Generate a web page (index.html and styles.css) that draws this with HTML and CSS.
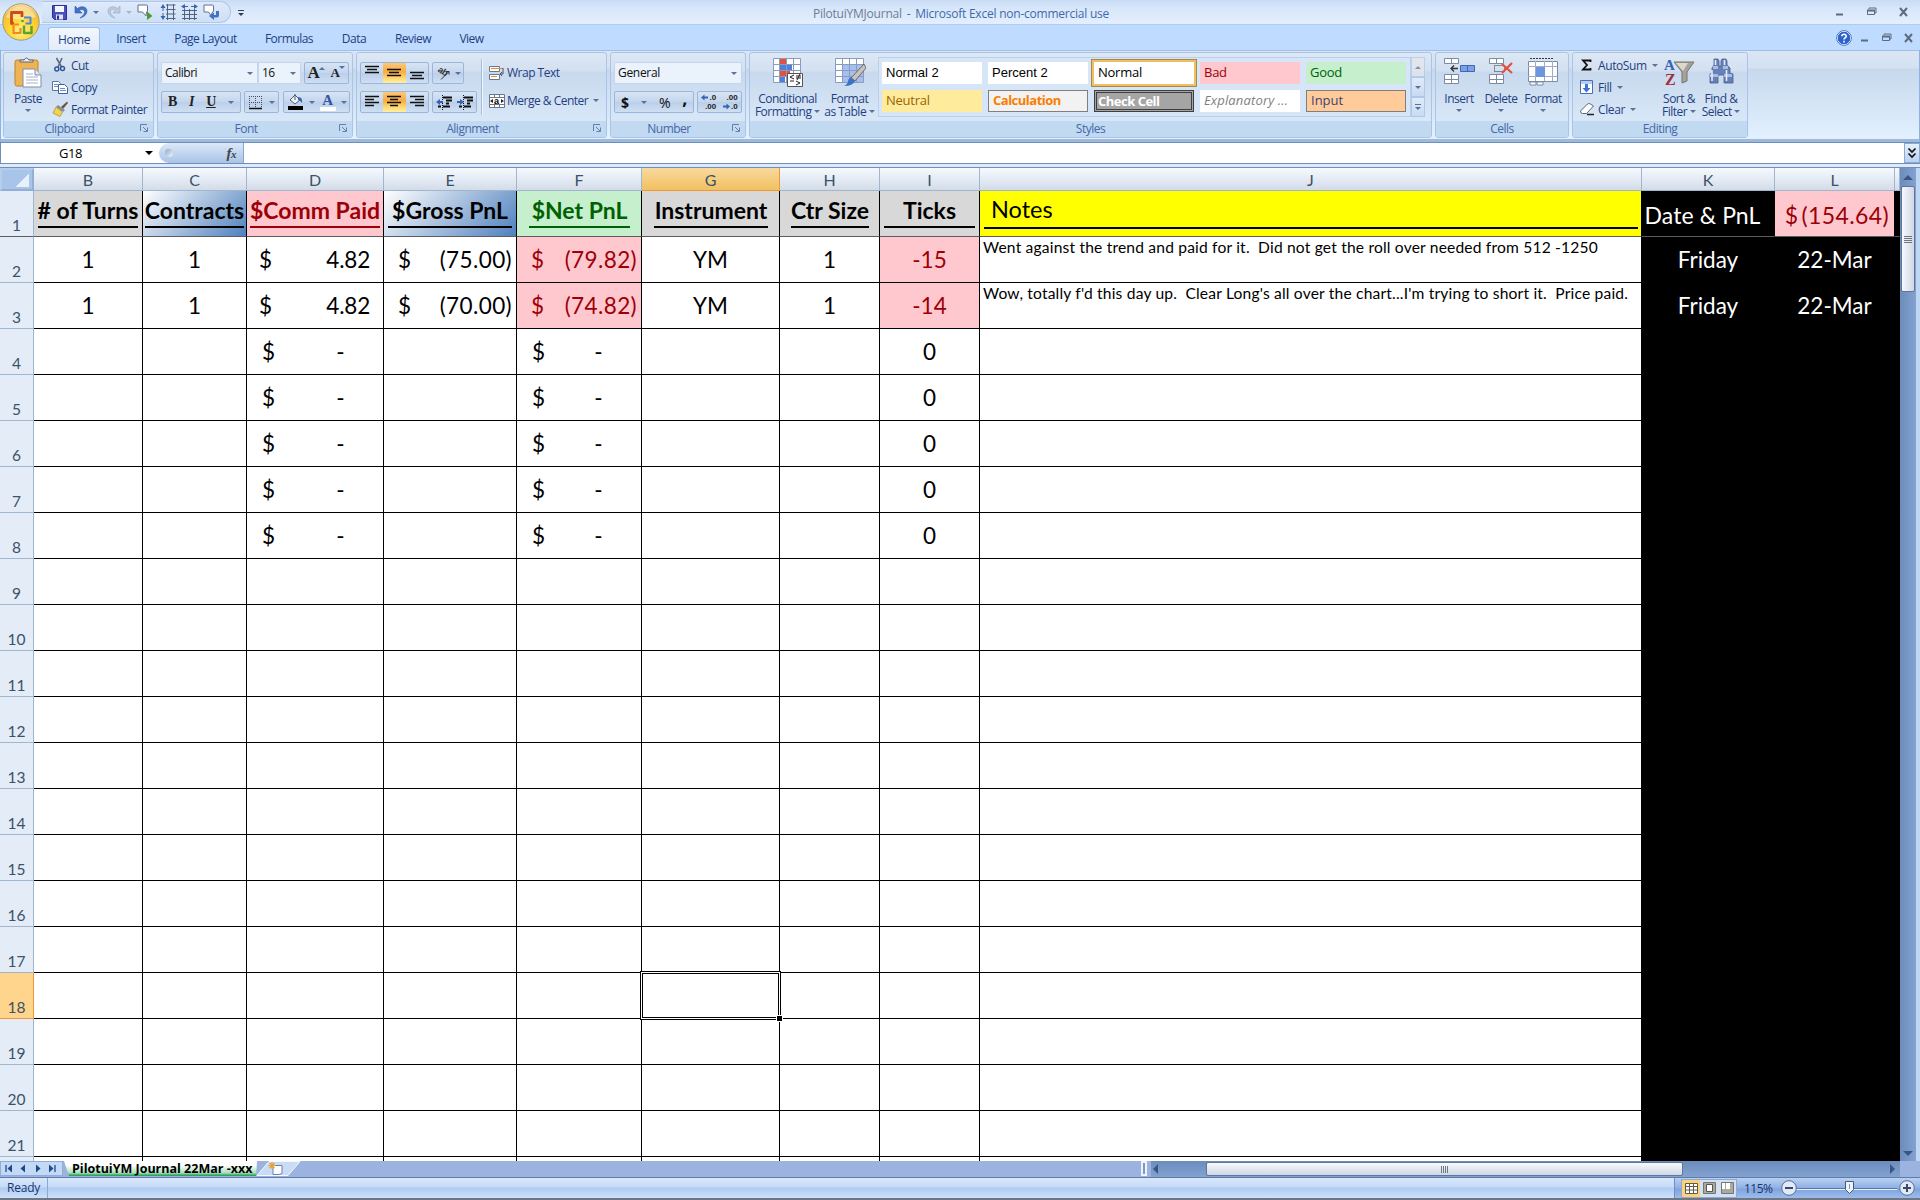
FILE: index.html
```html
<!DOCTYPE html>
<html lang="en">
<head>
    <meta charset="UTF-8">
    <title>PilotuiYMJournal - Microsoft Excel non-commercial use</title>
    <link rel="stylesheet" href="styles.css">
</head>
<body>
    <!-- Title bar -->
    <div class="titlebar">
        <div class="quick-access">
            <svg class="qa-save" width="15" height="15" viewBox="0 0 15 15"><path d="M0.5 0.5h14v14h-12l-2-2z" fill="#4a50b8" stroke="#2c3190"/><path d="M3 1h9v6H3z" fill="#f4f6ff"/><path d="M4 9.500h7v5H4z" fill="#dfe3f6"/><path d="M5 10.500h2v4H5z" fill="#2c3190"/></svg>
            <svg class="qa-undo" width="14" height="14" viewBox="0 0 14 14"><path d="M1 1v7h7L5.500 5.500C8 3.500 11 5 10.500 7.500 10 10 8 11.500 6 13c4-1 7-3.500 7-7C13 1.500 7 .5 3.500 3.500z" fill="#4472c8" stroke="#2f5aa8" stroke-width=".6"/></svg>
            <i class="arrow"></i>
            <svg class="qa-redo" width="14" height="14" viewBox="0 0 14 14"><path d="M13 1v7H6l2.500-2.500C6 3.500 3 5 3.500 7.500 4 10 6 11.500 8 13 4 12 1 9.500 1 6 1 1.500 7 .5 10.500 3.500z" fill="#bccbe2" stroke="#94a7c4" stroke-width=".6"/></svg>
            <i class="arrow faded"></i>
            <svg class="qa-note" width="16" height="16" viewBox="0 0 16 16"><path d="M1 1h8.500q1 0 1 1v5q0 1-1 1L9 12 5.500 8H1z" fill="#fff" stroke="#63718c"/><path d="M10 7.500l5.500 4.500-5.500 4z" fill="#4f9a35"/></svg>
            <svg class="qa-rows" width="16" height="16" viewBox="0 0 16 16"><path d="M6 1h9.500M6 5.500h9.500M6 10h9.500M6 14.500h9.500M7.500 0v16M13.500 0v16" stroke="#51627f" fill="none"/><path d="M3 0l2.500 4h-5zM3 16l2.500-4h-5z" fill="#3563b5"/><path d="M3 4v3M3 9v4" stroke="#3563b5"/></svg>
            <svg class="qa-cols" width="17" height="16" viewBox="0 0 17 16"><path d="M1 6.500h15M1 10.500h15M1 14.500h15M3.500 5v11M8.500 5v11M13.500 5v11" stroke="#51627f" fill="none"/><path d="M0 2.500l4-2.500v5zM17 2.500l-4-2.500v5z" fill="#3563b5"/><path d="M4 2.500h3M10 2.500h3" stroke="#3563b5"/></svg>
            <svg class="qa-back" width="17" height="16" viewBox="0 0 17 16"><path d="M1 1h8.500q1 0 1 1v5q0 1-1 1L8 11.500 5.500 8H1z" fill="#fff" stroke="#63718c"/><path d="M16 7v4.500q0 2-2 2h-3V16l-5-4 5-3.500V11h2V7z" fill="#4472c8"/></svg>
        </div>
        <div class="qa-more"></div>
        <div class="title"><span class="doc-name">PilotuiYMJournal</span> <span class="dash">-</span> <span class="app-name">Microsoft Excel non-commercial use</span></div>
        <div class="window-buttons">
            <svg width="12" height="12" viewBox="0 0 12 12"><path d="M2 8.500h7" stroke="#5d6b80" stroke-width="2"/></svg>
            <svg width="12" height="12" viewBox="0 0 12 12"><path d="M3 3V2h7v5H9M1.500 4.500h7v4h-7z" fill="none" stroke="#5d6b80"/><path d="M1 4.500h8" stroke="#5d6b80" stroke-width="2"/></svg>
            <svg width="12" height="12" viewBox="0 0 12 12"><path d="M2 2l7 8M9 2l-7 8" stroke="#5d6b80" stroke-width="2"/></svg>
        </div>
        <div class="office-button">
            <svg width="38" height="38" viewBox="0 0 38 38">
                <defs>
                    <radialGradient id="orb" cx=".5" cy=".75" r=".75"><stop offset="0" stop-color="#fff29a"/><stop offset=".45" stop-color="#ffd62e"/><stop offset=".8" stop-color="#f0bd3c"/><stop offset="1" stop-color="#fbe7b0"/></radialGradient>
                </defs>
                <circle cx="19" cy="19" r="18.200" fill="url(#orb)" stroke="#a5997a"/>
                <path d="M4 14a16 16 0 0 1 30 0q-15 5-30 0z" fill="#fff" opacity=".45"/>
                <path d="M12 20.500H9.500v-11H20V14" fill="none" stroke="#cf4a1a" stroke-width="2.800" stroke-linejoin="round"/>
                <path d="M22 14.500h6.500v6h-5" fill="none" stroke="#4a86d8" stroke-width="2" stroke-linejoin="round"/>
                <path d="M20.500 19v-2M22 22.500v7.500h7.500v-7" fill="none" stroke="#5ca52c" stroke-width="2.500" stroke-linejoin="round"/>
                <path d="M17 21.500h-5.500v8.500h7v-5" fill="none" stroke="#f08a1c" stroke-width="2.200" stroke-linejoin="round"/>
            </svg>
        </div>
    </div>

    <!-- Ribbon tabs -->
    <div class="tabs">
        <div class="tab active">Home</div>
        <div class="tab tab-insert">Insert</div>
        <div class="tab tab-layout">Page Layout</div>
        <div class="tab tab-formulas">Formulas</div>
        <div class="tab tab-data">Data</div>
        <div class="tab tab-review">Review</div>
        <div class="tab tab-view">View</div>
        <div class="tabs-right">
            <svg width="16" height="16" viewBox="0 0 16 16"><circle cx="8" cy="8" r="6.800" fill="#2e62cc" stroke="#fff" stroke-width="1"/><circle cx="8" cy="8" r="7.400" fill="none" stroke="#2f5fb5" stroke-width=".8"/><path d="M5.800 6.200C6 3.500 10.400 3.700 10.200 6.300 10 7.800 8 7.800 8 9.500M8 10.800v1.700" fill="none" stroke="#fff" stroke-width="1.600"/></svg>
            <svg width="12" height="12" viewBox="0 0 12 12"><path d="M2 8.500h7" stroke="#5d6b80" stroke-width="2"/></svg>
            <svg width="12" height="12" viewBox="0 0 12 12"><path d="M3 3V2h7v5H9M1.500 4.500h7v4h-7z" fill="none" stroke="#5d6b80"/><path d="M1 4.500h8" stroke="#5d6b80" stroke-width="2"/></svg>
            <svg width="12" height="12" viewBox="0 0 12 12"><path d="M2 2l7 8M9 2l-7 8" stroke="#5d6b80" stroke-width="2"/></svg>
        </div>
    </div>

    <!-- Ribbon -->
    <div class="ribbon">
        <div class="group clipboard">
            <div class="group-body">
                <div class="big-button">
                    <svg width="28" height="31" viewBox="0 0 28 31"><rect x="1" y="3" width="23" height="26" rx="2" fill="#eeb354" stroke="#c08428"/><path d="M6 5h13V3h-4q-2.500-4-5 0H6z" fill="#e8ebf0" stroke="#62656c"/><path d="M9 12h12l6 6v12H9z" fill="#fff" stroke="#7c8dae"/><path d="M21 12v6h6" fill="#dfe7f5" stroke="#7c8dae"/><path d="M12 17h7M12 20h12M12 23h12M12 26h12" stroke="#a5b3ca"/></svg>
                    <span>Paste</span>
                    <i class="arrow"></i>
                </div>
                <div class="small-buttons">
                    <div><svg width="16" height="16" viewBox="0 0 16 16"><path d="M4.500 1l5 9M10 1L6 10" stroke="#5d6c86" stroke-width="1.600"/><circle cx="4.800" cy="12" r="2" fill="none" stroke="#33559c" stroke-width="1.500"/><circle cx="10.500" cy="11.500" r="2" fill="none" stroke="#33559c" stroke-width="1.500"/></svg>Cut</div>
                    <div><svg width="16" height="16" viewBox="0 0 16 16"><path d="M.5 2.500h6l2 2v7h-8z" fill="#fff" stroke="#5673aa"/><path d="M2 5.500h4M2 7.500h5" stroke="#6b8bc4"/><path d="M6.500 5.500h6l3 3v6h-9z" fill="#fff" stroke="#40609e"/><path d="M8 9.500h5M8 11.500h6" stroke="#6b8bc4"/></svg>Copy</div>
                    <div><svg width="16" height="16" viewBox="0 0 16 16"><path d="M15 .5L9 6l2 2 5-6z" fill="#6e5540"/><path d="M6 4l7 5-2 2-7-5z" fill="#8490a4"/><path d="M4 6l6.500 5L8 15.500 1 12z" fill="#f1d251" stroke="#b08d24" stroke-width=".7"/></svg>Format Painter</div>
                </div>
            </div>
            <div class="group-label">Clipboard<svg class="launcher" width="9" height="9" viewBox="0 0 9 9"><path d="M.5 7V.5H7M3 3l4 4M7.500 3.500v4h-4" fill="none" stroke="#6380ae"/></svg></div>
        </div>

        <div class="group font">
            <div class="group-body stack">
                <div class="control-row">
                    <div class="combo font-name">Calibri<i class="arrow"></i></div>
                    <div class="combo font-size">16<i class="arrow"></i></div>
                    <div class="button-set grow-shrink">
                        <span class="serif">A<i class="arrow up"></i></span>
                        <span class="serif small">A<i class="arrow"></i></span>
                    </div>
                </div>
                <div class="control-row">
                    <div class="button-set biu">
                        <b class="serif">B</b>
                        <em class="serif">I</em>
                        <u class="serif">U</u>
                        <i class="arrow"></i>
                    </div>
                    <div class="button-set borders">
                        <svg width="15" height="15" viewBox="0 0 15 15"><path d="M1 1.500h13M1 7.500h13M1.500 1v12M7.500 1v12M13.500 1v12" stroke="#44506a" stroke-dasharray="1 1"/><path d="M1 13.500h13" stroke="#111" stroke-width="1.500"/></svg>
                        <i class="arrow"></i>
                    </div>
                    <div class="button-set colors">
                        <svg width="17" height="18" viewBox="0 0 17 18"><path d="M3 7l5-5 5 5-5 4z" fill="#eef2f8" stroke="#4d5c78"/><path d="M8 1v6" stroke="#4d5c78"/><path d="M11 4q5 0 4 6-2-3-4-3z" fill="#3563b5"/><path d="M1 13h15v4H1z" fill="#000"/></svg>
                        <i class="arrow"></i>
                        <span class="font-color serif">A</span>
                        <i class="arrow"></i>
                    </div>
                </div>
            </div>
            <div class="group-label">Font<svg class="launcher" width="9" height="9" viewBox="0 0 9 9"><path d="M.5 7V.5H7M3 3l4 4M7.500 3.500v4h-4" fill="none" stroke="#6380ae"/></svg></div>
        </div>

        <div class="group alignment">
            <div class="group-body">
                <div class="stack align-left">
                    <div class="control-row">
                        <div class="button-set trio">
                            <span><svg width="15" height="15" viewBox="0 0 15 15"><path d="M0 1.500h14M2 4.500h10M0 7.500h14" stroke="#111" stroke-width="1.500"/></svg></span>
                            <span class="on"><svg width="15" height="15" viewBox="0 0 15 15"><path d="M0 4.500h14M2 7.500h10M0 10.500h14" stroke="#111" stroke-width="1.500"/></svg></span>
                            <span><svg width="15" height="15" viewBox="0 0 15 15"><path d="M0 7.500h14M2 10.500h10M0 13.500h14" stroke="#111" stroke-width="1.500"/></svg></span>
                        </div>
                        <div class="button-set orient">
                            <svg width="16" height="16" viewBox="0 0 16 16"><text x="2" y="9" font-size="9" font-weight="bold" font-family="Liberation Sans, sans-serif" fill="#333" transform="rotate(35 7 8)">ab</text><path d="M6 14.500l8-8M11 6.500h3v3" fill="none" stroke="#333"/></svg>
                            <i class="arrow"></i>
                        </div>
                    </div>
                    <div class="control-row">
                        <div class="button-set trio">
                            <span><svg width="15" height="15" viewBox="0 0 15 15"><path d="M0 2.500h14M0 5.500h9M0 8.500h14M0 11.500h9" stroke="#111" stroke-width="1.500"/></svg></span>
                            <span class="on"><svg width="15" height="15" viewBox="0 0 15 15"><path d="M0 2.500h14M3 5.500h8M0 8.500h14M3 11.500h8" stroke="#111" stroke-width="1.500"/></svg></span>
                            <span><svg width="15" height="15" viewBox="0 0 15 15"><path d="M0 2.500h14M5 5.500h9M0 8.500h14M5 11.500h9" stroke="#111" stroke-width="1.500"/></svg></span>
                        </div>
                        <div class="button-set indent">
                            <svg width="16" height="15" viewBox="0 0 16 15"><path d="M7 2.500h9M10 5.500h6M10 8.500h3M2 11.500h3M7 11.500h7" stroke="#111" stroke-width="2"/><path d="M6.500 0v15" stroke="#111" stroke-dasharray="1 1"/><path d="M0 7l4-3v2h3v2H4v2z" fill="#3563b5"/></svg>
                            <svg width="16" height="15" viewBox="0 0 16 15"><path d="M7 2.500h9M10 5.500h6M10 8.500h3M2 11.500h3M7 11.500h7" stroke="#111" stroke-width="2"/><path d="M6.500 0v15" stroke="#111" stroke-dasharray="1 1"/><path d="M7 7L3 4v2H0v2h3v2z" fill="#3563b5"/></svg>
                        </div>
                    </div>
                </div>
                <div class="align-right">
                    <div><svg width="16" height="16" viewBox="0 0 16 16"><path d="M.5 1.500h10v5H.5zM.5 9.500h10v5H.5z" fill="#fff" stroke="#6c7688"/><path d="M2 3.500h12M2 11.500h6" stroke="#e08a3c"/><path d="M14 3v6h-2M13 7l-2 2 2 2" fill="none" stroke="#44506a"/></svg>Wrap Text</div>
                    <div><svg width="16" height="16" viewBox="0 0 16 16"><path d="M.5 1.500h15v13H.5zM.5 4.500h15M.5 11.500h15M5.500 1v3M10.500 1v3M5.500 12v3M10.500 12v3" fill="#fff" stroke="#6c7688"/><text x="5" y="11" font-size="9" font-weight="bold" font-family="Liberation Sans, sans-serif">a</text><path d="M1 8l3-2v4zM15 8l-3-2v4z" fill="#222"/></svg>Merge &amp; Center<i class="arrow"></i></div>
                </div>
            </div>
            <div class="group-label">Alignment<svg class="launcher" width="9" height="9" viewBox="0 0 9 9"><path d="M.5 7V.5H7M3 3l4 4M7.500 3.500v4h-4" fill="none" stroke="#6380ae"/></svg></div>
        </div>

        <div class="group number">
            <div class="group-body stack">
                <div class="control-row">
                    <div class="combo number-format">General<i class="arrow"></i></div>
                </div>
                <div class="control-row">
                    <div class="button-set currency">
                        <b>$</b>
                        <i class="arrow"></i>
                        <span>%</span>
                        <b class="comma">,</b>
                    </div>
                    <div class="button-set decimals">
                        <div class="decimal">
                            <span><svg width="8" height="7" viewBox="0 0 8 7"><path d="M0 3.500L3.500 .5v2H7v2H3.500v2z" fill="#3563b5"/></svg>.0</span>
                            <span>.00</span>
                        </div>
                        <div class="decimal">
                            <span>.00</span>
                            <span><svg width="8" height="7" viewBox="0 0 8 7"><path d="M7 3.500L3.500 .5v2H0v2h3.500v2z" fill="#3563b5"/></svg>.0</span>
                        </div>
                    </div>
                </div>
            </div>
            <div class="group-label">Number<svg class="launcher" width="9" height="9" viewBox="0 0 9 9"><path d="M.5 7V.5H7M3 3l4 4M7.500 3.500v4h-4" fill="none" stroke="#6380ae"/></svg></div>
        </div>

        <div class="group styles">
            <div class="group-body">
                <div class="big-button wide">
                    <svg width="32" height="31" viewBox="0 0 32 31"><path d="M1.500 1.500h27v24h-27z" fill="#fff" stroke="#8a9cbd"/><path d="M8 2h6v5H8zM8 14h10v5H8z" fill="#e2503e"/><path d="M8 8h12v5H8zM8 20h5v5H8z" fill="#4d7fdb"/><path d="M7.500 1v25M14.500 1v25M21.500 1v25M1 7.500h28M1 13.500h28M1 19.500h28" stroke="#8a9cbd" fill="none"/><path d="M15.500 16.500h15v13h-15z" fill="#fff" stroke="#555"/><path d="M22 18l-4 2 4 2M18 24h4M24 19h5M24 21h5M28 17l-3 6M24 24l4 2-4 2" fill="none" stroke="#222"/></svg>
                    <span>Conditional<br>Formatting <i class="arrow"></i></span>
                </div>
                <div class="big-button table-format">
                    <svg width="32" height="31" viewBox="0 0 32 31"><path d="M1.500 1.500h28v24h-28z" fill="#fff" stroke="#8a9cbd"/><path d="M8 8h21v17H8z" fill="#a5c0f0"/><path d="M8.500 1v25M15.500 1v25M22.500 1v25M1 7.500h29M1 13.500h29M1 19.500h29" stroke="#8a9cbd" fill="none"/><path d="M30 7l2 4-11 13-4-3z" fill="#c9c3bb" stroke="#5e5148" stroke-width=".8"/><path d="M17 20l4 4q-2 5-11 5 4-2 4-5 0-2 3-4z" fill="#3b74c4"/></svg>
                    <span>Format<br>as Table <i class="arrow"></i></span>
                </div>
                <div class="gallery">
                    <div class="style arial">Normal 2</div>
                    <div class="style arial">Percent 2</div>
                    <div class="style selected">Normal</div>
                    <div class="style bad">Bad</div>
                    <div class="style good">Good</div>
                    <div class="style neutral">Neutral</div>
                    <div class="style calculation">Calculation</div>
                    <div class="style check-cell">Check Cell</div>
                    <div class="style explanatory">Explanatory ...</div>
                    <div class="style input">Input</div>
                </div>
                <div class="gallery-scroll">
                    <span class="disabled"><i class="arrow up"></i></span>
                    <span><i class="arrow"></i></span>
                    <span class="expand"><i class="arrow"></i></span>
                </div>
            </div>
            <div class="group-label">Styles</div>
        </div>

        <div class="group cells">
            <div class="group-body">
                <div class="big-button">
                    <svg width="32" height="31" viewBox="0 0 32 31"><path d="M1.500 1.500h14v5h-14zM8.500 1v5M1.500 17.500h14v9h-14zM8.500 17v9M1.500 22.500h14" fill="#fff" stroke="#7c8aa6"/><path d="M17.500 8.500h14v6h-14z" fill="#7da0e6" stroke="#4166b5"/><path d="M24.500 8v7" stroke="#4166b5"/><path d="M8 11.500h7M11 8.500l-3 3 3 3" fill="none" stroke="#333" stroke-width="1.300"/></svg>
                    <span>Insert</span>
                    <i class="arrow"></i>
                </div>
                <div class="big-button">
                    <svg width="32" height="31" viewBox="0 0 32 31"><path d="M4.500 1.500h14v5h-14zM11.500 1v5M4.500 17.500h14v9h-14zM11.500 17v9M4.500 22.500h14" fill="#fff" stroke="#7c8aa6"/><path d="M9.500 8.500h10v6h-10z" fill="none" stroke="#333" stroke-dasharray="1 1"/><path d="M17 7l10 9M27 6l-10 10" stroke="#e2503e" stroke-width="2.200"/></svg>
                    <span>Delete</span>
                    <i class="arrow"></i>
                </div>
                <div class="big-button">
                    <svg width="32" height="31" viewBox="0 0 32 31"><path d="M1.500 4.500h29v20h-29z" fill="#fff" stroke="#7c8aa6"/><path d="M8.500 4v20M17.500 4v20M25.500 4v20M1 9.500h29M1 19.500h29" stroke="#9fadc6"/><path d="M9 10h9v10H9z" fill="#6e95e0"/><path d="M3 1.500h24" stroke="#333" stroke-dasharray="2 1"/><path d="M3 25h6v3H3zM10 25h6v3h-6z" fill="#fff" stroke="#7c8aa6"/></svg>
                    <span>Format</span>
                    <i class="arrow"></i>
                </div>
            </div>
            <div class="group-label">Cells</div>
        </div>

        <div class="group editing">
            <div class="group-body">
                <div class="small-buttons">
                    <div><svg width="16" height="16" viewBox="0 0 16 16"><path d="M11.500 5V3.500H4L8 8l-4 4.500h7.500V11" fill="none" stroke="#111" stroke-width="1.800"/></svg>AutoSum<i class="arrow"></i></div>
                    <div><svg width="16" height="16" viewBox="0 0 16 16"><path d="M1.500 1.500h12v13h-12z" fill="#fff" stroke="#4a6db3"/><path d="M2 2h11v3H2z" fill="#b9cdf0"/><path d="M6 5h3v4h2.500l-4 4.500-4-4.500H6z" fill="#3f74d8"/></svg>Fill<i class="arrow"></i></div>
                    <div><svg width="16" height="16" viewBox="0 0 16 16"><path d="M1.500 10l7-7q1-1 3 0l3 2-7 7.500H3.500q-2 0-2-2.500z" fill="#fff" stroke="#5a6579"/><path d="M8 13.500h7" stroke="#222" stroke-width="1.500"/></svg>Clear<i class="arrow"></i></div>
                </div>
                <div class="big-button sort">
                    <svg width="32" height="31" viewBox="0 0 32 31"><path d="M11 5h20l-7 10v9l-5 2V15z" fill="#a5a398" stroke="#77756c"/><path d="M13 6h12l-5 8z" fill="#dad8cf"/><text x="1" y="13" font-size="15" font-weight="bold" font-family="Liberation Serif, serif" fill="#3563b5">A</text><text x="2" y="28" font-size="16" font-weight="bold" font-family="Liberation Serif, serif" fill="#a03040">Z</text></svg>
                    <span>Sort &amp;<br>Filter <i class="arrow"></i></span>
                </div>
                <div class="big-button">
                    <svg width="32" height="31" viewBox="0 0 32 31"><path d="M9 2h4l1 2v5h2V4l1-2h4l1 2v4l3 3v5l3 1v9h-9v-8h-6v8H5v-9l2-1v-5l2-3z" fill="#6781b8" stroke="#4a5e8c" stroke-width=".8"/><path d="M5 17h8v3H5zM19 17h8v3h-8zM8 9h5v3H8zM18 9h5v3h-5z" fill="#a9bce2"/><path d="M7 13v11M21.500 13v11M10.500 3v5M19.500 3v5" stroke="#e4ecfb" stroke-width="1.600"/></svg>
                    <span>Find &amp;<br>Select <i class="arrow"></i></span>
                </div>
            </div>
            <div class="group-label">Editing</div>
        </div>
    </div>

    <!-- Formula bar -->
    <div class="formula-bar">
        <div class="name-box">G18<i class="arrow"></i></div>
        <div class="fx"><i class="knob"></i><span>f<small>x</small></span></div>
        <div class="formula"></div>
        <div class="formula-expand"><svg width="10" height="12" viewBox="0 0 10 12"><path d="M1.500 1.500L5 5l3.500-3.500M1.500 6.500L5 10l3.500-3.500" fill="none" stroke="#111" stroke-width="1.700"/></svg></div>
    </div>

    <div class="workspace">
        <div class="sheet">
            <div class="row col-heads">
                <div class="corner"></div>
                <div>B</div><div>C</div><div>D</div><div>E</div><div>F</div><div class="current">G</div>
                <div>H</div><div>I</div><div>J</div><div>K</div><div>L</div><div></div>
            </div>
            <div class="row header-row">
                <div class="row-num">1</div>
                <div class="cell gray"><span class="underlined"># of Turns</span></div>
                <div class="cell blue"><span class="underlined">Contracts</span></div>
                <div class="cell bad"><span class="underlined">$Comm Paid</span></div>
                <div class="cell blue"><span class="underlined">$Gross PnL</span></div>
                <div class="cell good"><span class="underlined short">$Net PnL</span></div>
                <div class="cell gray"><span class="underlined short">Instrument</span></div>
                <div class="cell gray"><span class="underlined short">Ctr Size</span></div>
                <div class="cell gray"><span class="underlined">Ticks</span></div>
                <div class="cell yellow"><span class="underlined notes-head">Notes</span></div>
                <div class="cell black total-label">Date &amp; PnL</div>
                <div class="cell bad total"><span>$</span><span>(154.64)</span></div>
                <div class="cell black"></div>
            </div>
        </div>
        <div class="vscroll">
            <i class="arrow up"></i>
            <div class="vthumb"><i class="grip"></i></div>
            <i class="arrow down"></i>
        </div>
    </div>

    <!-- Sheet tabs and horizontal scrollbar -->
    <div class="bottom-bar">
        <div class="sheet-nav">
            <svg width="8" height="9" viewBox="0 0 8 9"><path d="M1 1v7" stroke="#1e4a8c" stroke-width="1.300"/><path d="M7 .5v8L2.500 4.500z" fill="#1e4a8c"/></svg>
            <svg width="8" height="9" viewBox="0 0 8 9"><path d="M6 .5v8L1.500 4.500z" fill="#1e4a8c"/></svg>
            <svg width="8" height="9" viewBox="0 0 8 9"><path d="M2 .5v8l4.500-4z" fill="#1e4a8c"/></svg>
            <svg width="8" height="9" viewBox="0 0 8 9"><path d="M7 1v7" stroke="#1e4a8c" stroke-width="1.300"/><path d="M1 .5v8l4.500-4z" fill="#1e4a8c"/></svg>
        </div>
        <div class="sheet-tab">PilotuiYM Journal 22Mar -xxx</div>
        <svg class="new-sheet" width="46" height="15" viewBox="0 0 46 15"><path d="M1 14.500L13 .5h31L32 14.500z" fill="#c9dbf5" stroke="#f4f8ff"/><path d="M17 4.500h9v8l-3 1h-6z" fill="#fff" stroke="#6a7fae"/><path d="M16 1v7M12.500 4.500h7M13.500 2l5 5M18.500 2l-5 5" stroke="#e8a13a" stroke-width="1.200"/></svg>
        <div class="splitter"></div>
        <div class="hscroll">
            <i class="arrow left"></i>
            <div class="hthumb"><i class="grip"></i></div>
            <i class="arrow right"></i>
        </div>
    </div>

    <!-- Status bar -->
    <div class="status-bar">
        <div class="ready">Ready</div>
        <div class="status-right">
            <div class="views">
                <span class="on"><svg width="13" height="11" viewBox="0 0 13 11"><path d="M.5.5h12v10H.5zM.5 3.500h12M.5 7h12M4.500 0v11M8.500 0v11" fill="#fff" stroke="#5f5a50"/></svg></span>
                <span><svg width="13" height="12" viewBox="0 0 13 12"><path d="M.5.5h12v11H.5z" fill="#aaa9a0" stroke="#77766e"/><path d="M3.500 2.500h6v7h-6z" fill="#fff" stroke="#555"/></svg></span>
                <span><svg width="13" height="12" viewBox="0 0 13 12"><path d="M.5.5h12v11H.5z" fill="#aaa9a0" stroke="#77766e"/><path d="M1 1h3v6H1zM5 1h4v6H5z" fill="#fff"/></svg></span>
            </div>
            <div class="zoom-level">115%</div>
            <svg class="zoom-slider" width="136" height="18" viewBox="0 0 136 18">
                <path d="M16 9.500h101" stroke="#5577b0"/><path d="M16 10.500h101" stroke="#e6f0ff"/>
                <circle cx="9" cy="9" r="7.300" fill="#dfe9f8" stroke="#5a6f93"/><path d="M5 9h8" stroke="#3b4a66" stroke-width="2"/>
                <circle cx="127" cy="9" r="7.300" fill="#dfe9f8" stroke="#5a6f93"/><path d="M123 9h8M127 5v8" stroke="#3b4a66" stroke-width="2"/>
                <path d="M65.500 2.500h8v8l-4 4-4-4z" fill="#eef4fd" stroke="#44597e"/><path d="M69.500 5v5" stroke="#7f93b5"/>
            </svg>
        </div>
    </div>

    <script>
        const trades = {
            2: { comm: '4.82', gross: '(75.00)', net: '(79.82)', ticks: '-15', notes: 'Went against the trend and paid for it.  Did not get the roll over needed from 512 -1250' },
            3: { comm: '4.82', gross: '(70.00)', net: '(74.82)', ticks: '-14', notes: "Wow, totally f'd this day up.  Clear Long's all over the chart...I'm trying to short it.  Price paid." }
        };

        const cell = (content = '', cls = '') => `<div class="cell ${cls}">${content}</div>`;
        const money = (amount, cls = '') => cell(`<span>$</span><span>${amount}</span>`, 'money ' + cls);

        const sheet = document.querySelector('.sheet');
        let html = '';

        for (let n = 2; n <= 22; n++) {
            const t = trades[n];
            html += `<div class="row"><div class="row-num ${n === 18 ? 'current' : ''}">${n < 22 ? n : ''}</div>`;
            if (t) {
                html += cell('1') + cell('1') + money(t.comm, 'positive') + money(t.gross) + money(t.net, 'bad') +
                    cell('YM') + cell('1') + cell(t.ticks, 'bad') + cell(t.notes, 'notes') +
                    cell('Friday', 'black') + cell('22-Mar', 'black') + cell('', 'black');
            } else {
                const blank = n <= 8 ? money('-', 'zero') : cell();
                html += cell() + cell() + blank + cell() + blank +
                    cell('', n === 18 ? 'selected' : '') + cell() + cell(n <= 8 ? '0' : '') + cell() +
                    cell('', 'black') + cell('', 'black') + cell('', 'black');
            }
            html += '</div>';
        }
        sheet.insertAdjacentHTML('beforeend', html);
    </script>
</body>
</html>
```
FILE: styles.css
```css
* {
    box-sizing: border-box;
}

body {
    margin: 0;
    width: 1920px;
    height: 1200px;
    overflow: hidden;
    display: flex;
    flex-direction: column;
    background: #6d7684;
    font-family: "Open Sans", "Noto Sans", sans-serif;
    font-size: 12px;
    letter-spacing: -0.5px;
    color: #1e3f80;
}

svg {
    display: block;
    flex: none;
}

.arrow {
    display: inline-block;
    width: 0;
    height: 0;
    border: 3px solid transparent;
    border-top-color: #5b7199;
    border-bottom: 0;
    flex: none;
}

.arrow.up {
    border-top: 0;
    border-bottom: 3px solid #5b7199;
}

.arrow.faded {
    opacity: 0.4;
}

.serif {
    font-family: "Liberation Serif", serif;
    font-weight: bold;
    color: #222;
}

/* Title bar */
.titlebar {
    position: relative;
    height: 25px;
    display: flex;
    align-items: center;
    background: linear-gradient(#c9dcf5, #d9e7fa 40%, #e4effe);
    border-bottom: 1px solid #aecbf0;
}

.office-button {
    position: absolute;
    left: 2px;
    top: 3px;
    z-index: 2;
}

.quick-access {
    width: 189px;
    height: 22px;
    margin-left: 42px;
    padding-left: 10px;
    display: flex;
    align-items: center;
    border: 1px solid #b3c8e6;
    border-left: 0;
    border-radius: 0 11px 11px 0;
    background: linear-gradient(#dfeafb, #cddff6);
}

.qa-undo { margin-left: 7px; }
.qa-undo + .arrow { margin-left: 5px; }
.qa-redo { margin-left: 8px; }
.qa-redo + .arrow { margin-left: 5px; }
.qa-note { margin-left: 5px; }
.qa-rows { margin-left: 7px; }
.qa-cols { margin-left: 5px; }
.qa-back { margin-left: 5px; }

.qa-more {
    margin-left: 7px;
    width: 6px;
    border-top: 1px solid #333f58;
    height: 5px;
    position: relative;
}

.qa-more::after {
    content: "";
    position: absolute;
    top: 2px;
    left: 0;
    border: 3px solid transparent;
    border-top-color: #333f58;
    border-bottom: 0;
}

.title {
    margin-left: 569px;
    padding-top: 2px;
    letter-spacing: -0.23px;
    color: #3e6aaa;
    white-space: nowrap;
}

.doc-name {
    color: #6c7c95;
}

.dash {
    margin: 0 2px;
}

.window-buttons {
    margin-left: auto;
    margin-right: 10px;
    display: flex;
    gap: 20px;
}

/* Ribbon tabs */
.tabs {
    height: 25px;
    padding-left: 48px;
    display: flex;
    background: #bfdbff;
}

.tab {
    padding-top: 2px;
    display: flex;
    align-items: center;
    justify-content: center;
}

.tab.active {
    width: 52px;
    height: 23px;
    margin: 2px 3px 0 0;
    padding-top: 0;
    border: 1px solid #9dbde6;
    border-bottom: 0;
    border-radius: 3px 3px 0 0;
    background: linear-gradient(#f2f7fe, #e2ecf9);
}

.tab-insert { width: 56px; }
.tab-layout { width: 93px; }
.tab-formulas { width: 74px; }
.tab-data { width: 56px; }
.tab-review { width: 62px; }
.tab-view { width: 55px; }

.tabs-right {
    margin-left: auto;
    margin-right: 5px;
    display: flex;
    align-items: center;
    gap: 10px;
}

.tabs-right svg:first-child {
    margin-right: -3px;
}

/* Ribbon */
.ribbon {
    height: 92px;
    padding: 2px 2px 0;
    display: flex;
    gap: 3px;
    border: 1px solid #8db2e3;
    border-width: 0 1px;
    background: linear-gradient(#9fbfe8 1px, #dbe6f4 1px, #d3e1f2 18px, #c7d8ed 19px, #e3f1ff 89px, #9db9dc 89px, #9db9dc 91px);
}

.group {
    height: 86px;
    display: flex;
    flex-direction: column;
    flex: none;
    border: 1px solid #a9c4e6;
    border-radius: 3px;
    background: linear-gradient(#dde8f5, #d3e0f1 18px, #c8d9ee 19px, #d9e8f8 69px);
    overflow: hidden;
}

.group-body {
    height: 68px;
    display: flex;
}

.group-label {
    position: relative;
    height: 16px;
    line-height: 16px;
    text-align: center;
    background: #c1d9f1;
    color: #4468a8;
}

.launcher {
    position: absolute;
    right: 4px;
    top: 3px;
}

.clipboard { width: 151px; }
.font { width: 196px; }
.alignment { width: 251px; }
.number { width: 136px; }
.styles { width: 683px; }
.cells { width: 134px; }
.editing { width: 176px; }

.clipboard .group-label,
.font .group-label,
.alignment .group-label,
.number .group-label {
    padding-right: 18px;
}

.big-button {
    width: 42px;
    padding-top: 4px;
    display: flex;
    flex-direction: column;
    align-items: center;
    text-align: center;
    line-height: 13px;
    white-space: nowrap;
}

.big-button > span {
    margin-top: 4px;
}

.big-button > .arrow {
    margin-top: 4px;
}

.big-button span .arrow {
    vertical-align: 3px;
}

.small-buttons > div {
    height: 22px;
    display: flex;
    align-items: center;
}

.small-buttons svg {
    margin-right: 3px;
}

.small-buttons .arrow {
    margin-left: 5px;
}

.clipboard .big-button {
    width: 48px;
}

.clipboard .small-buttons {
    padding-top: 1px;
    letter-spacing: -0.55px;
}

.stack {
    display: flex;
    flex-direction: column;
    padding: 9px 0 0 3px;
    gap: 7px;
}

.control-row {
    height: 22px;
    display: flex;
}

.combo {
    padding: 0 4px 1px 3px;
    display: flex;
    align-items: center;
    justify-content: space-between;
    background: #eaf2fb;
    border: 1px solid #c3d6ef;
    color: #111;
}

.combo .arrow {
    margin-top: 1px;
}

.font-name { width: 97px; }
.font-size { width: 43px; }

.number-format {
    width: 128px;
    letter-spacing: -0.3px;
}

.button-set {
    display: flex;
    align-items: center;
    justify-content: space-around;
    border: 1px solid #9ab6dc;
    border-radius: 2px;
    background: linear-gradient(#d8e4f3, #c4d6ed 50%, #bacfea 51%, #cfdff3);
}

.grow-shrink {
    width: 45px;
    margin-left: 3px;
    font-size: 17px;
}

.grow-shrink .small {
    font-size: 13px;
}

.grow-shrink .arrow {
    vertical-align: 8px;
}

.biu {
    width: 80px;
    font-size: 14px;
}

.borders {
    width: 35px;
    margin-left: 3px;
}

.colors {
    width: 67px;
    margin-left: 4px;
}

.font-color {
    width: 16px;
    height: 17px;
    line-height: 13px;
    font-size: 15px;
    text-align: center;
    color: #33559c;
    border-bottom: 4px solid #fff;
}

.trio {
    width: 69px;
}

.trio span {
    width: 23px;
    height: 20px;
    padding: 2px 0 0 4px;
}

.trio .on {
    background: linear-gradient(#fbc77c, #f8ab3e 45%, #fdd26a 70%, #fff0a0);
}

.orient {
    width: 32px;
    margin-left: 3px;
}

.indent {
    width: 45px;
    margin-left: 3px;
}

.align-right {
    margin: 6px 0 6px 5px;
    padding-left: 6px;
    border-left: 1px solid #f0f6fd;
    box-shadow: -1px 0 #a4bcdc;
    white-space: nowrap;
}

.align-right > div {
    height: 29px;
    display: flex;
    align-items: center;
}

.align-right > div:first-child {
    height: 27px;
}

.align-right svg {
    margin-right: 2px;
}

.align-right .arrow {
    margin-left: 5px;
}

.currency {
    width: 80px;
    font-size: 14px;
    color: #111;
}

.currency .comma {
    font-size: 18px;
    line-height: 10px;
    margin-top: -8px;
}

.decimals {
    width: 45px;
    margin-left: 3px;
}

.decimal {
    font-family: "Liberation Sans", sans-serif;
    font-size: 8px;
    font-weight: bold;
    letter-spacing: 0;
    color: #222;
}

.decimal span {
    height: 9px;
    line-height: 9px;
    display: flex;
    align-items: center;
    justify-content: flex-end;
}

.styles .big-button.wide {
    width: 67px;
    margin-left: 4px;
}

.styles .table-format {
    width: 57px;
}

.gallery {
    height: 60px;
    margin-top: 4px;
    padding: 4px 5px 0 3px;
    width: 533px;
    display: grid;
    grid-template-columns: repeat(5, 100px);
    grid-template-rows: 22px 22px;
    gap: 6px;
    border: 1px solid #b9cfeb;
    background: #d6e5f8;
}

.style {
    padding-left: 4px;
    line-height: 21px;
    font-size: 13px;
    background: #fff;
    color: #000;
    white-space: nowrap;
    letter-spacing: -0.25px;
}

.style.arial {
    font-family: "Liberation Sans", sans-serif;
    letter-spacing: 0;
}

.style.selected {
    outline: 2px solid #f0c060;
    box-shadow: 0 0 0 3px #a88a50;
}

.style.neutral {
    background: #ffeb9c;
    color: #9c6500;
}

.style.calculation {
    line-height: 19px;
    border: 1px solid #7f7f7f;
    background: #f2f2f2;
    color: #fa7d00;
    font-weight: bold;
    letter-spacing: -0.5px;
}

.style.check-cell {
    line-height: 16px;
    padding-left: 1px;
    border: 3px double #3f3f3f;
    background: #a5a5a5;
    color: #fff;
    font-weight: bold;
    letter-spacing: -0.5px;
}

.style.explanatory {
    font-style: italic;
    color: #7f7f7f;
    letter-spacing: 0.15px;
}

.style.input {
    line-height: 19px;
    border: 1px solid #7f7f7f;
    background: #ffcc99;
    color: #3f3f76;
    letter-spacing: 0;
}

.bad {
    background: #ffc7ce !important;
    color: #9c0006 !important;
}

.good {
    background: #c6efce !important;
    color: #006100 !important;
}

.gallery-scroll {
    width: 14px;
    height: 60px;
    margin-top: 4px;
    display: grid;
    grid-template-rows: repeat(3, 20px);
}

.gallery-scroll span {
    display: flex;
    align-items: center;
    justify-content: center;
    border: 1px solid #b0c8e8;
    background: linear-gradient(#dfebfa, #c8daf2);
}

.gallery-scroll .disabled {
    background: #e6e8ea;
    opacity: 0.7;
}

.expand .arrow {
    border-image: none;
    margin-top: 2px;
}

.gallery-scroll .expand {
    background: linear-gradient(#5b7199, #5b7199) center 6px / 6px 1px no-repeat, linear-gradient(#dfebfa, #c8daf2);
}

.cells .big-button:first-child {
    margin-left: 2px;
}

.editing .small-buttons {
    width: 85px;
    padding: 1px 0 0 6px;
    letter-spacing: -0.4px;
}

/* Formula bar */
.formula-bar {
    height: 26px;
    flex: none;
    display: flex;
    border-top: 1px solid #6f8fba;
    border-bottom: 1px solid #6f8fba;
    background: linear-gradient(transparent 20px, #6f8fba 20px, #6f8fba 21px, #dceafb 21px), #fff;
    color: #000;
}

.name-box {
    width: 157px;
    height: 20px;
    padding: 0 4px 0 58px;
    display: flex;
    align-items: center;
    justify-content: space-between;
    border-left: 1px solid #6f8fba;
    font-size: 13px;
}

.name-box .arrow {
    border-width: 4px 4px 0;
    border-top-color: #000;
}

.fx {
    width: 85px;
    height: 20px;
    margin-left: 2px;
    padding: 0 7px 0 6px;
    display: flex;
    align-items: center;
    justify-content: space-between;
    border-radius: 10px 0 0 10px;
    border-right: 1px solid #8aa6cc;
    background: linear-gradient(#dce8f8, #a9c3e6);
    font-family: "Liberation Serif", serif;
    font-style: italic;
    font-weight: bold;
    font-size: 15px;
    color: #444;
}

.fx small {
    font-size: 11px;
}

.knob {
    width: 8px;
    height: 8px;
    border-radius: 50%;
    background: linear-gradient(135deg, #8ea5c8, #f2f7fe);
}

.formula {
    flex: 1;
    height: 20px;
}

.formula-expand {
    width: 16px;
    height: 20px;
    display: flex;
    align-items: center;
    justify-content: center;
    border: 1px solid #8aa9d4;
    background: linear-gradient(#e6f0fd, #b9d1f0);
}

/* Sheet */
.workspace {
    height: 993px;
    flex: none;
    display: flex;
    background: #bfd6f5;
}

.sheet {
    width: 1900px;
    height: 993px;
    overflow: hidden;
    background: #fff;
    font-family: Lato, sans-serif;
    font-size: 22.5px;
    letter-spacing: 0;
    color: #000;
}

.row {
    height: 46px;
    display: grid;
    grid-template-columns: 34px 109px 104px 137px 133px 125px 138px 100px 100px 662px 133px 120px 5px;
}

.col-heads {
    height: 23px;
    font-size: 16px;
    color: #3b5268;
}

.col-heads > div {
    display: flex;
    align-items: center;
    justify-content: center;
    border-right: 1px solid #9eb6ce;
    border-bottom: 1px solid #9eb6ce;
    background: linear-gradient(#f6f9fd, #e3eaf4 55%, #d3dbe8);
}

.col-heads .corner {
    border: 2px solid #b7cdec;
    border-right-color: #93afd6;
    border-bottom-color: #93afd6;
    background: linear-gradient(to top left, #e8f0fb 50%, transparent 50%) right 3px bottom 2px / 13px 13px no-repeat, #a9c4e9;
}

.col-heads .current {
    background: linear-gradient(#f9d99f, #f1c15f);
    border-color: #f29536;
}

.row-num {
    display: flex;
    align-items: flex-end;
    justify-content: center;
    padding: 0 0 3px 0;
    border-right: 1px solid #9eb6ce;
    border-bottom: 1px solid #9eb6ce;
    background: #e4ecf7;
    font-size: 15.5px;
    line-height: 16px;
    color: #3b5268;
}

.row-num.current {
    background: #ffd58d;
    border-color: #f29536;
}

.cell {
    position: relative;
    min-width: 0;
    display: flex;
    align-items: center;
    justify-content: center;
    border-right: 1px solid #000;
    border-bottom: 1px solid #000;
    white-space: pre;
}

.header-row .cell,
.header-row .row-num {
    border-bottom-color: #5c5c5c;
}

.header-row .cell {
    font-weight: bold;
    font-size: 23px;
}

.gray {
    background: #d8d8d8;
}

.blue {
    background: linear-gradient(135deg, #fff, #4f81bd);
}

.yellow {
    background: #ff0;
}

.cell.black {
    background: #000;
    color: #fff;
}

.header-row .total-label,
.header-row .total {
    font-weight: normal;
    padding-top: 2px;
}

.header-row .total-label {
    letter-spacing: 0.1px;
    padding-right: 11px;
}

.header-row .total {
    gap: 3px;
    justify-content: flex-end;
    padding-right: 5px;
    letter-spacing: 0.4px;
}

.underlined {
    width: 100%;
    height: 37px;
    margin: -8px 4px 0;
    line-height: 38px;
    display: flex;
    justify-content: center;
    border-bottom: 2px solid;
}

.underlined.short {
    margin: -8px 11px 0 12px;
}

.underlined.notes-head {
    justify-content: flex-start;
    margin: -6px 3px 0 4px;
    padding-left: 7px;
    line-height: 34px;
    font-weight: normal;
    font-size: 23.5px;
}

.money {
    justify-content: space-between;
    padding-left: 14px;
    padding-right: 4px;
    letter-spacing: 0.4px;
}

.money.positive {
    padding-left: 12px;
    padding-right: 13px;
    letter-spacing: -0.2px;
}

.money.zero {
    padding-left: 15px;
    padding-right: 38px;
}

.notes {
    align-items: flex-start;
    justify-content: flex-start;
    padding: 1px 0 0 3px;
    font-size: 15.6px;
    letter-spacing: 0.18px;
}

/* active cell frame sits on the grid lines */
.cell.selected::after {
    content: "";
    position: absolute;
    z-index: 1;
    inset: -1px;
    border: 1px solid #fff;
    box-shadow: 0 0 0 1px #000, inset 0 0 0 1px #000;
}

.cell.selected::before {
    content: "";
    position: absolute;
    z-index: 2;
    right: -3px;
    bottom: -3px;
    width: 5px;
    height: 5px;
    background: #000;
    outline: 1px solid #fff;
}

/* Scrollbars */
.vscroll {
    width: 16px;
    display: flex;
    flex-direction: column;
    align-items: center;
    background: linear-gradient(90deg, #6c8cbc, #83a2d0);
}

.vscroll .arrow {
    border-width: 0 5px 5px;
    border-bottom-color: #3a5580;
    margin: 7px 0 6px;
}

.vthumb {
    width: 14px;
    height: 106px;
    display: flex;
    align-items: center;
    justify-content: center;
    border: 1px solid #5f7695;
    border-radius: 2px;
    background: linear-gradient(90deg, #f7f9fc, #cfd8e6);
}

.vthumb .grip {
    width: 8px;
    height: 7px;
    background: repeating-linear-gradient(#6b7888 0 1px, transparent 1px 2px);
}

.vscroll .arrow.down {
    margin: auto 0 5px;
    border-width: 5px 5px 0;
    border-color: #3a5580 transparent;
}

.bottom-bar {
    height: 17px;
    flex: none;
    display: flex;
    border-bottom: 1px solid #5d7bab;
    background: #9bb3de;
}

.sheet-nav {
    width: 63px;
    height: 15px;
    padding: 0 6px 0 4px;
    display: flex;
    align-items: center;
    justify-content: space-between;
    border: 1px solid #8fadd9;
    background: #c4d9f6;
}

.sheet-tab {
    width: 193px;
    height: 15px;
    margin-left: 1px;
    padding-left: 8px;
    line-height: 16px;
    background: linear-gradient(#fff 30%, #a8dfb8 80%, #2fa35c 95%);
    color: #000;
    font-size: 12.5px;
    font-weight: bold;
    letter-spacing: 0;
    white-space: nowrap;
    clip-path: polygon(0 0, 100% 0, 192px 100%, 5px 100%);
}

.splitter {
    width: 6px;
    height: 15px;
    margin-left: auto;
    margin-right: 4px;
    border: 2px solid #eef4fd;
    background: #7d98c8;
}

.new-sheet {
    margin-left: -1px;
}

.hscroll {
    width: 749px;
    height: 16px;
    margin-right: 20px;
    display: flex;
    align-items: center;
    background: linear-gradient(#6c8cbc, #83a2d0);
}

.hscroll .arrow {
    border: 5px solid transparent;
    border-left: 0;
    border-right-color: #3a5580;
    margin-left: 2px;
}

.hthumb {
    width: 477px;
    height: 14px;
    margin-left: 48px;
    display: flex;
    align-items: center;
    justify-content: center;
    border: 1px solid #5f7695;
    border-radius: 2px;
    background: linear-gradient(#f7f9fc, #cfd8e6);
}

.hthumb .grip {
    width: 7px;
    height: 7px;
    background: repeating-linear-gradient(90deg, #6b7888 0 1px, transparent 1px 2px);
}

.hscroll .arrow.right {
    margin-left: auto;
    margin-right: 5px;
    border: 5px solid transparent;
    border-right: 0;
    border-left-color: #3a5580;
}

/* Status bar */
.status-bar {
    height: 20px;
    flex: none;
    display: flex;
    align-items: center;
    background: linear-gradient(#d9e7fa, #c5dbf8 45%, #afcbf2 50%, #cfe2fb);
    color: #17366e;
}

.ready {
    width: 48px;
    height: 20px;
    padding-left: 7px;
    line-height: 20px;
    letter-spacing: -0.2px;
    border-right: 1px solid #8aa9d6;
}

.status-right {
    width: 246px;
    height: 20px;
    margin-left: auto;
    padding-left: 6px;
    display: flex;
    align-items: center;
    border-left: 1px solid #6f8fc4;
    background: linear-gradient(#b9d0f2, #8fb0e4 50%, #7fa3dc 55%, #9dbcec);
}

.views {
    display: flex;
    border: 1px solid #8fa9d2;
}

.views span {
    width: 18px;
    height: 17px;
    display: flex;
    align-items: center;
    justify-content: center;
    background: #d3e1f5;
}

.views .on {
    background: #fbd27a;
}

.zoom-level {
    width: 43px;
    padding-left: 7px;
}
```
